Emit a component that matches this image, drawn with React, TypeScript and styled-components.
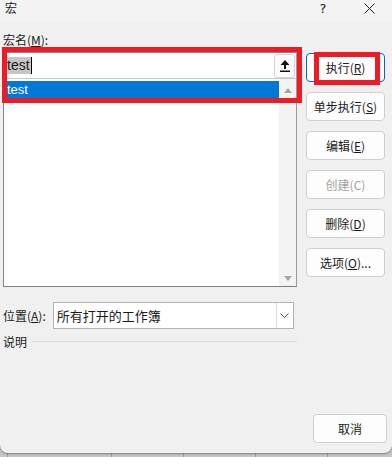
import styled, { createGlobalStyle } from "styled-components";

const GlobalStyle = createGlobalStyle`
  html, body {
    margin: 0;
    padding: 0;
    background: #c4c4c4;
  }
  body {
    font-family: "Noto Sans CJK SC", "Noto Sans", sans-serif;
    font-size: 12px;
    color: #1a1a1a;
  }
`;

/* the sheet behind the dialog shows a few column lines at the bottom */
const Screen = styled.div`
  width: 392px;
  height: 457px;
  background-color: #c6c6c6;
  background-image: repeating-linear-gradient(
    90deg,
    transparent 0 71px,
    #9e9e9e 71px 72px
  );
  background-position: 40px 0;
  overflow: hidden;
`;

const Dialog = styled.div`
  position: relative;
  width: 392px;
  height: 453px;
  background: #f0f0f0;
  border-radius: 0 0 8px 8px;
  box-shadow: 0 1px 2px rgba(0, 0, 0, 0.35);
  display: flex;
  flex-direction: column;
`;

const TitleBar = styled.div`
  height: 22px;
  background: #f3f3f3;
  display: flex;
  align-items: flex-start;
  padding-left: 5px;
`;

const Title = styled.span`
  line-height: 16px;
  font-size: 12px;
  flex: 1;
`;

const TitleButton = styled.div<{ w: number }>`
  width: ${(p) => p.w}px;
  height: 16px;
  display: flex;
  align-items: center;
  justify-content: center;
  font-family: "DejaVu Sans", sans-serif;
  font-size: 13px;
  color: #222;
`;

const Content = styled.div`
  flex: 1;
  display: flex;
  padding-left: 3px;
`;

const LeftCol = styled.div`
  width: 294px;
  display: flex;
  flex-direction: column;
`;

const Label = styled.div`
  margin-top: 10px;
  line-height: 16px;
  height: 16px;
  margin-bottom: 4px;
`;

const MacroBox = styled.div`
  height: 233px;
  border: 1px solid #82828a;
  border-right-color: #9a9aa0;
  background: #fff;
  display: flex;
  flex-direction: column;
`;

const NameInput = styled.div`
  height: 25px;
  display: flex;
  align-items: center;
  padding-left: 3px;
  padding-right: 1px;
  border-bottom: 1px solid #c8c8c8;
`;

const Selected = styled.span`
  background: #c6c6c6;
  line-height: 17px;
  font-family: "Liberation Sans", sans-serif;
  font-size: 14px;
  padding: 0 1px 0 0;
`;

const Caret = styled.span`
  width: 1px;
  height: 17px;
  background: #000;
`;

const Spacer = styled.div`
  flex: 1;
`;

const UploadButton = styled.div`
  width: 19px;
  height: 22px;
  border: 1px solid #d4d4d4;
  border-radius: 3px;
  background: #fbfbfb;
  display: flex;
  align-items: center;
  justify-content: center;
`;

const ListArea = styled.div`
  flex: 1;
  display: flex;
`;

const ListItems = styled.div`
  flex: 1;
  padding: 2px 0 0 2px;
`;

const ListItem = styled.div<{ active?: boolean }>`
  height: 17px;
  line-height: 17px;
  padding-left: 1px;
  font-family: "Liberation Sans", sans-serif;
  font-size: 13px;
  background: ${(p) => (p.active ? "#0078d7" : "transparent")};
  color: ${(p) => (p.active ? "#fff" : "#000")};
`;

const ScrollBar = styled.div`
  width: 17px;
  background: #f3f3f3;
  display: flex;
  flex-direction: column;
  justify-content: space-between;
  align-items: center;
  padding: 9px 0 5px;
`;

const PositionRow = styled.div`
  margin-top: 15px;
  display: flex;
  align-items: center;
  gap: 7px;
`;

const Combo = styled.div`
  width: 239px;
  height: 25px;
  border: 1px solid #b4b4b4;
  background: #fff;
  display: flex;
  align-items: stretch;
`;

const ComboText = styled.div`
  flex: 1;
  padding-left: 3px;
  line-height: 25px;
  font-size: 13px;
`;

const ComboArrow = styled.div`
  width: 16px;
  border-left: 1px solid #dcdcdc;
  display: flex;
  align-items: center;
  justify-content: center;
`;

const DescRow = styled.div`
  margin-top: 3px;
  display: flex;
  align-items: center;
  gap: 5px;
  height: 18px;
`;

const Rule = styled.div`
  flex: 1;
  height: 1px;
  background: #dadada;
`;

const RightCol = styled.div`
  margin-left: 9px;
  width: 79px;
  padding-top: 31px;
  display: flex;
  flex-direction: column;
  gap: 10px;
`;

const Button = styled.div<{ primary?: boolean; disabled?: boolean; w?: number }>`
  box-sizing: border-box;
  width: ${(p) => p.w ?? 79}px;
  height: 29px;
  border: 1px solid ${(p) => (p.primary ? "#0a64c8" : "#d0d0d0")};
  border-radius: 4px;
  background: #fdfdfd;
  display: flex;
  align-items: center;
  justify-content: center;
  font-size: 12px;
  color: ${(p) => (p.disabled ? "#a2a2a2" : "#1a1a1a")};
`;

const Footer = styled.div`
  display: flex;
  justify-content: flex-end;
  padding: 0 5px 10px 0;
`;

const Mark = styled.div<{ x: number; y: number; w: number; h: number }>`
  position: absolute;
  left: ${(p) => p.x}px;
  top: ${(p) => p.y}px;
  width: ${(p) => p.w}px;
  height: ${(p) => p.h}px;
  box-sizing: border-box;
  border: 5px solid #ed1c24;
  pointer-events: none;
`;

const Tri = ({ down }: { down?: boolean }) => (
  <svg width="8" height="5" viewBox="0 0 8 5">
    <polygon points={down ? "0,0 8,0 4,5" : "0,5 8,5 4,0"} fill="#a6a6a6" />
  </svg>
);

export default function App() {
  return (
    <Screen>
      <GlobalStyle />
      <Dialog>
        <TitleBar>
          <Title>宏</Title>
          <TitleButton w={46}>?</TitleButton>
          <TitleButton w={46}>
            <svg width="11" height="11" viewBox="0 0 11 11">
              <path d="M0.5 0.5 L10.5 10.5 M10.5 0.5 L0.5 10.5" stroke="#222" strokeWidth="1" />
            </svg>
          </TitleButton>
        </TitleBar>
        <Content>
          <LeftCol>
            <Label>
              宏名(<u>M</u>):
            </Label>
            <MacroBox>
              <NameInput>
                <Selected>test</Selected>
                <Caret />
                <Spacer />
                <UploadButton>
                  <svg width="10" height="12" viewBox="0 0 10 12">
                    <polygon points="5,0 9.5,5 6,5 6,9 4,9 4,5 0.5,5" fill="#111" />
                    <rect x="0" y="10.5" width="10" height="1.5" fill="#111" />
                  </svg>
                </UploadButton>
              </NameInput>
              <ListArea>
                <ListItems>
                  <ListItem active>test</ListItem>
                </ListItems>
                <ScrollBar>
                  <Tri />
                  <Tri down />
                </ScrollBar>
              </ListArea>
            </MacroBox>
            <PositionRow>
              <span>
                位置(<u>A</u>):
              </span>
              <Combo>
                <ComboText>所有打开的工作簿</ComboText>
                <ComboArrow>
                  <svg width="9" height="5" viewBox="0 0 9 5">
                    <path d="M0.5 0.5 L4.5 4.5 L8.5 0.5" fill="none" stroke="#555" strokeWidth="1" />
                  </svg>
                </ComboArrow>
              </Combo>
            </PositionRow>
            <DescRow>
              <span>说明</span>
              <Rule />
            </DescRow>
          </LeftCol>
          <RightCol>
            <Button primary>
              执行(<u>R</u>)
            </Button>
            <Button>
              单步执行(<u>S</u>)
            </Button>
            <Button>
              编辑(<u>E</u>)
            </Button>
            <Button disabled>创建(C)</Button>
            <Button>
              删除(<u>D</u>)
            </Button>
            <Button>
              选项(<u>O</u>)...
            </Button>
          </RightCol>
        </Content>
        <Footer>
          <Button w={74}>取消</Button>
        </Footer>
        <Mark x={2} y={47} w={300} h={56} />
        <Mark x={314} y={52} w={66} h={33} />
      </Dialog>
    </Screen>
  );
}
